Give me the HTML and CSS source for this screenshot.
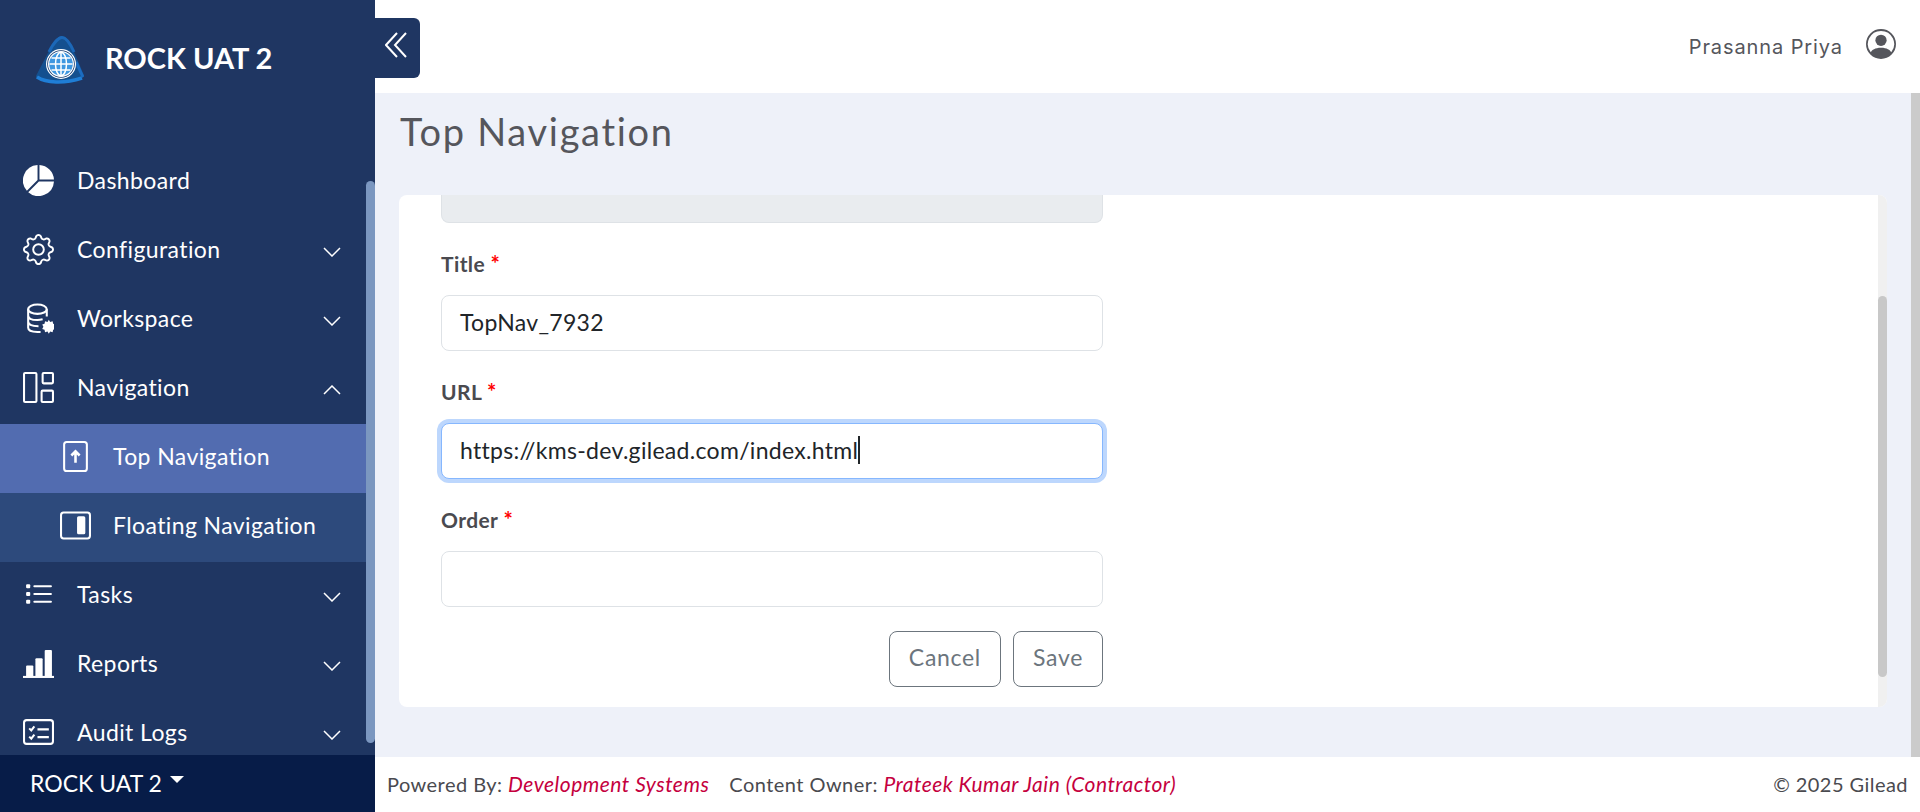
FILE: index.html
```html
<!DOCTYPE html>
<html>
  <head>
    <title>Top Navigation</title>
    <meta charset="UTF-8">
    <link rel="stylesheet" href="styles.css">
  </head>
  <body>
    <aside class="sidebar">
      <div class="brand">
        <svg class="brand-logo" viewBox="0 0 48 48">
          <path d="M26 0C30 0 33 4 36 11L47 37C49 41 47 42 44 43C31 48 16 48 3 43C0 42 -1 41 1 38L15 11C19 4 22 0 26 0Z" fill="#14508f"/>
          <path d="M13 16C18 6 23 1.500 26 1.500C30 1.500 34 7 38 16" fill="none" stroke="#1c68b8" stroke-width="3"/>
          <path d="M1 41C10 47 28 48 46 42" fill="none" stroke="#1f7ed6" stroke-width="3.500"/>
          <path d="M47 41C44 35 42 30 40 26" fill="none" stroke="#1c6cc0" stroke-width="3"/>
          <circle cx="25" cy="28" r="15" fill="#fff"/>
          <circle cx="25" cy="28" r="13.800" fill="#12386e"/>
          <circle cx="25" cy="28" r="13" fill="#fff"/>
          <circle cx="25" cy="28" r="11.800" fill="#3f97e0"/>
          <g fill="none" stroke="#fff" stroke-width="1.500">
            <ellipse cx="25" cy="28" rx="5.500" ry="11.800"/>
            <path d="M25 16.500V39.500M13.500 28H36.500M15.500 22H34.500M15.500 34H34.500"/>
          </g>
        </svg>
        <span class="brand-name">ROCK UAT 2</span>
      </div>
      <div class="nav-wrap">
        <nav class="nav">
          <a class="nav-item">
            <svg class="nav-icon" viewBox="0 0 16 16" fill="#fff"><path d="M15.985 8.500H8.207l-5.500 5.500a8 8 0 0 0 13.277-5.500zM2 13.293A8 8 0 0 1 7.500.015v7.778l-5.500 5.500zM8.500.015V7.500h7.485A8 8 0 0 0 8.500.015z"/></svg>
            <span class="nav-label">Dashboard</span>
          </a>
          <a class="nav-item">
            <svg class="nav-icon" viewBox="0 0 16 16" fill="#fff"><path d="M8 4.754a3.246 3.246 0 1 0 0 6.492 3.246 3.246 0 0 0 0-6.492zM5.754 8a2.246 2.246 0 1 1 4.492 0 2.246 2.246 0 0 1-4.492 0z"/><path d="M9.796 1.343c-.527-1.790-3.065-1.790-3.592 0l-.094.319a.873.873 0 0 1-1.255.520l-.292-.160c-1.640-.892-3.433.902-2.540 2.541l.159.292a.873.873 0 0 1-.520 1.255l-.319.094c-1.790.527-1.790 3.065 0 3.592l.319.094a.873.873 0 0 1 .520 1.255l-.160.292c-.892 1.640.901 3.434 2.541 2.540l.292-.159a.873.873 0 0 1 1.255.520l.094.319c.527 1.790 3.065 1.790 3.592 0l.094-.319a.873.873 0 0 1 1.255-.520l.292.160c1.640.893 3.434-.902 2.540-2.541l-.159-.292a.873.873 0 0 1 .520-1.255l.319-.094c1.790-.527 1.790-3.065 0-3.592l-.319-.094a.873.873 0 0 1-.520-1.255l.160-.292c.893-1.640-.902-3.433-2.541-2.540l-.292.159a.873.873 0 0 1-1.255-.520l-.094-.319zm-2.633.283c.246-.835 1.428-.835 1.674 0l.094.319a1.873 1.873 0 0 0 2.693 1.115l.291-.160c.764-.415 1.600.420 1.184 1.185l-.159.292a1.873 1.873 0 0 0 1.116 2.692l.318.094c.835.246.835 1.428 0 1.674l-.319.094a1.873 1.873 0 0 0-1.115 2.693l.160.291c.415.764-.420 1.600-1.185 1.184l-.291-.159a1.873 1.873 0 0 0-2.693 1.116l-.094.318c-.246.835-1.428.835-1.674 0l-.094-.319a1.873 1.873 0 0 0-2.692-1.115l-.292.160c-.764.415-1.600-.420-1.184-1.185l.159-.291A1.873 1.873 0 0 0 1.945 8.930l-.319-.094c-.835-.246-.835-1.428 0-1.674l.319-.094A1.873 1.873 0 0 0 3.060 4.377l-.160-.292c-.415-.764.420-1.600 1.185-1.184l.292.159a1.873 1.873 0 0 0 2.692-1.115l.094-.319z"/></svg>
            <span class="nav-label">Configuration</span>
            <svg class="chevron" viewBox="0 0 18 10"><path d="M1 1L9 9L17 1"/></svg>
          </a>
          <a class="nav-item">
            <svg class="nav-icon" viewBox="0 0 30 30" fill="none" stroke="#fff" stroke-width="2">
              <ellipse cx="14" cy="6" rx="9" ry="4.500"/>
              <path d="M5 6V24C5 26.500 8.500 28 14 28H17M5 12C5 15 9 16.500 14 16.500C15.500 16.500 17 16.300 19 15.800M5 18C5 21 9 22.500 15 22.500M23 6V13"/>
              <path d="M24 14.500l1.500 2.500 2.800-.8.600 2.800 2.600 1-1.300 2.500 1.300 2.500-2.600 1-.6 2.800-2.800-.8-1.500 2.500-1.500-2.500-2.800.8-.6-2.800-2.600-1 1.300-2.500-1.300-2.500 2.600-1 .6-2.800 2.800.8z" transform="translate(25 23) scale(.85) translate(-24 -22.500)" fill="#fff" stroke="none"/>
            </svg>
            <span class="nav-label">Workspace</span>
            <svg class="chevron" viewBox="0 0 18 10"><path d="M1 1L9 9L17 1"/></svg>
          </a>
          <a class="nav-item">
            <svg class="nav-icon" viewBox="0 0 30 30" fill="none" stroke="#fff" stroke-width="2">
              <rect x="1" y="1" width="12" height="28" rx="1"/>
              <rect x="19" y="1" width="10" height="10" rx="1"/>
              <rect x="18" y="18" width="11" height="11" rx="1"/>
            </svg>
            <span class="nav-label">Navigation</span>
            <svg class="chevron" viewBox="0 0 18 10"><path d="M1 9L9 1L17 9"/></svg>
          </a>
          <a class="nav-item sub active">
            <svg class="sub-icon" viewBox="0 0 30 30" fill="none" stroke="#fff" stroke-width="2">
              <rect x="4" y="1" width="22" height="28" rx="2.500"/>
              <path d="M15 21V10M11 14L15 10L19 14" stroke-width="2.500"/>
            </svg>
            <span class="nav-label">Top Navigation</span>
          </a>
          <a class="nav-item sub">
            <svg class="sub-icon" viewBox="0 0 30 30" fill="none" stroke="#fff" stroke-width="2">
              <rect x="1" y="2.500" width="28" height="25" rx="2.500"/>
              <rect x="16.500" y="6" width="8" height="17.500" rx="1.500" fill="#fff" stroke="none"/>
            </svg>
            <span class="nav-label">Floating Navigation</span>
          </a>
          <a class="nav-item">
            <svg class="nav-icon" viewBox="0 0 30 30" fill="#fff">
              <rect x="3" y="5" width="4" height="4" rx="1"/>
              <rect x="3" y="12.500" width="4" height="4" rx="1"/>
              <rect x="3" y="20" width="4" height="4" rx="1"/>
              <rect x="10" y="6" width="18" height="2" rx="1"/>
              <rect x="10" y="13.500" width="18" height="2" rx="1"/>
              <rect x="10" y="21" width="18" height="2" rx="1"/>
            </svg>
            <span class="nav-label">Tasks</span>
            <svg class="chevron" viewBox="0 0 18 10"><path d="M1 1L9 9L17 1"/></svg>
          </a>
          <a class="nav-item">
            <svg class="nav-icon" viewBox="0 0 30 30" fill="#fff">
              <rect x="3" y="17" width="7" height="11" rx="1"/>
              <rect x="12" y="10" width="7" height="18" rx="1"/>
              <rect x="21" y="2" width="7" height="26" rx="1"/>
              <rect x="0" y="27" width="30" height="2"/>
            </svg>
            <span class="nav-label">Reports</span>
            <svg class="chevron" viewBox="0 0 18 10"><path d="M1 1L9 9L17 1"/></svg>
          </a>
          <a class="nav-item">
            <svg class="nav-icon" viewBox="0 0 30 30" fill="none" stroke="#fff" stroke-width="2">
              <rect x="1" y="3" width="28" height="23" rx="2.500"/>
              <path d="M6 11L8 13L11 9M6 19L8 21L11 17M14 12H25M14 19.500H25"/>
            </svg>
            <span class="nav-label">Audit Logs</span>
            <svg class="chevron" viewBox="0 0 18 10"><path d="M1 1L9 9L17 1"/></svg>
          </a>
        </nav>
        <div class="nav-scroll"><div class="nav-thumb"></div></div>
      </div>
      <div class="env">ROCK UAT 2<span class="env-caret"></span></div>
    </aside>

    <div class="page">
      <header class="topbar">
        <button class="toggle">
          <svg viewBox="0 0 22 26" fill="none" stroke="#fff" stroke-width="2"><path d="M12 1L1 13L12 25M21 1L10 13L21 25"/></svg>
        </button>
        <div class="user">
          <span class="user-name">Prasanna Priya</span>
          <svg class="user-icon" viewBox="0 0 16 16" fill="#55565c"><path d="M11 6a3 3 0 1 1-6 0 3 3 0 0 1 6 0z"/><path d="M0 8a8 8 0 1 1 16 0A8 8 0 0 1 0 8zm8-7a7 7 0 0 0-5.468 11.370C3.242 11.226 4.805 10 8 10s4.757 1.225 5.468 2.370A7 7 0 0 0 8 1z"/></svg>
        </div>
      </header>

      <div class="middle">
        <main class="content">
          <h1>Top Navigation</h1>
          <section class="card">
            <form class="form">
              <div class="input disabled"></div>
              <label class="label">Title <span class="req">*</span></label>
              <div class="input">TopNav_7932</div>
              <label class="label">URL <span class="req">*</span></label>
              <div class="input focus">https://kms-dev.gilead.com/index.html<span class="caret"></span></div>
              <label class="label">Order <span class="req">*</span></label>
              <div class="input"></div>
              <div class="actions">
                <button class="btn" type="button">Cancel</button>
                <button class="btn" type="button">Save</button>
              </div>
            </form>
            <div class="card-scroll"><div class="card-thumb"></div></div>
          </section>
        </main>
        <div class="page-scroll"></div>
      </div>

      <footer class="footer">
        <span>Powered By: <em>Development Systems</em></span>
        <span class="owner">Content Owner: <em>Prateek Kumar Jain (Contractor)</em></span>
        <span class="copy">© 2025 Gilead</span>
      </footer>
    </div>
  </body>
</html>
```

FILE: styles.css
```css
/* Layout shell */
html,
body {
  height: 100%;
}

body {
  margin: 0;
  display: flex;
  overflow: hidden;
  font-family: Lato, "Open Sans", sans-serif;
  color: #4a4a4f;
  background-color: #fff;
}

/* Sidebar */
.sidebar {
  width: 375px;
  flex-shrink: 0;
  display: flex;
  flex-direction: column;
  background-color: #1f3662;
  color: #fff;
}

.brand {
  height: 148px;
  flex-shrink: 0;
  box-sizing: border-box;
  display: flex;
  align-items: flex-start;
  padding: 36px 0 0 36px;
  gap: 21px;
}

.brand-logo {
  width: 48px;
  height: 48px;
}

.brand-name {
  font-size: 29px;
  font-weight: 700;
  line-height: 44px;
}

.nav-wrap {
  flex: 1;
  min-height: 0;
  display: flex;
  overflow: hidden;
}

.nav {
  flex: 1;
  display: flex;
  flex-direction: column;
}

.nav-item {
  height: 69px;
  flex-shrink: 0;
  box-sizing: border-box;
  display: flex;
  align-items: center;
  padding: 0 25px 5px 23px;
  font-size: 23px;
  letter-spacing: 0.4px;
}

.nav-icon {
  width: 31px;
  height: 31px;
  margin-right: 23px;
  flex-shrink: 0;
}

.nav-label {
  flex: 1;
}

.chevron {
  width: 18px;
  height: 10px;
  margin-top: 5px;
  fill: none;
  stroke: #fff;
  stroke-width: 1.500;
}

.sub {
  padding-left: 60px;
  background-color: #2d4a7c;
}

.sub.active {
  background-color: #526cb0;
}

.sub-icon {
  width: 31px;
  height: 31px;
  margin-right: 22px;
  flex-shrink: 0;
}

.nav-scroll {
  width: 9px;
  flex-shrink: 0;
}

.nav-thumb {
  height: 562px;
  margin-top: 33px;
  border-radius: 5px;
  background-color: #7b97c0;
}

.env {
  height: 57px;
  flex-shrink: 0;
  box-sizing: border-box;
  display: flex;
  align-items: center;
  padding: 0 0 2px 30px;
  font-size: 23px;
  background-color: #071c48;
}

.env-caret {
  margin: 0 0 6px 8px;
  border-top: 7px solid #fff;
  border-left: 7px solid transparent;
  border-right: 7px solid transparent;
}

/* Main column */
.page {
  flex: 1;
  min-width: 0;
  display: flex;
  flex-direction: column;
}

.topbar {
  height: 93px;
  flex-shrink: 0;
  display: flex;
  align-items: flex-start;
  justify-content: space-between;
  background-color: #fff;
}

.toggle {
  width: 45px;
  height: 60px;
  margin-top: 18px;
  padding: 0 0 0 10px;
  display: flex;
  align-items: center;
  border: none;
  border-radius: 0 6px 6px 0;
  background-color: #1f3662;
}

.toggle svg {
  width: 22px;
  height: 26px;
  margin-top: -6px;
}

.user {
  display: flex;
  align-items: center;
  gap: 23px;
  padding: 29px 24px 0 0;
}

.user-name {
  margin-top: 5px;
  font-family: Inter, sans-serif;
  font-size: 20px;
  letter-spacing: 0.9px;
  color: #55565c;
}

.user-icon {
  width: 30px;
  height: 30px;
}

.middle {
  flex: 1;
  min-height: 0;
  display: flex;
  background-color: #eef1f9;
}

.content {
  flex: 1;
  min-width: 0;
  padding: 0 24px 0 24px;
}

h1 {
  height: 102px;
  margin: 0 0 0 1px;
  box-sizing: border-box;
  padding-top: 15px;
  font-size: 38px;
  font-weight: 400;
  line-height: 46px;
  letter-spacing: 1.7px;
  color: #55565c;
}

.card {
  height: 512px;
  display: flex;
  border-radius: 8px;
  overflow: hidden;
  background-color: #fff;
}

.form {
  flex: 1;
  padding: 0 0 0 42px;
  display: flex;
  flex-direction: column;
  align-items: flex-start;
}

.label {
  height: 72px;
  box-sizing: border-box;
  padding-top: 27px;
  font-size: 21px;
  font-weight: 700;
  line-height: 28px;
  letter-spacing: 0.4px;
}

.req {
  font-size: 22px;
  color: #f00;
}

.input {
  width: 662px;
  height: 56px;
  flex-shrink: 0;
  box-sizing: border-box;
  display: flex;
  align-items: center;
  padding: 0 18px 2px;
  font-size: 23px;
  letter-spacing: 0.3px;
  color: #212529;
  border: 1px solid #dee2e6;
  border-radius: 8px;
  background-color: #fff;
}

.input.disabled {
  height: 28px;
  border-top: none;
  border-radius: 0 0 8px 8px;
  background-color: #e9ecef;
}

.input.focus {
  border-color: #86b7fe;
  box-shadow: 0 0 0 4px #bdd7fd;
}

.caret {
  width: 2px;
  height: 28px;
  background-color: #212529;
}

.actions {
  width: 662px;
  margin-top: 24px;
  display: flex;
  justify-content: flex-end;
  gap: 12px;
}

.btn {
  height: 56px;
  padding: 0 19px 4px;
  font-family: Lato, sans-serif;
  font-size: 23px;
  letter-spacing: 0.7px;
  color: #6c757d;
  border: 1px solid #6c757d;
  border-radius: 8px;
  background-color: #fff;
}

.card-scroll {
  width: 9px;
  flex-shrink: 0;
  background-color: #f0f0f0;
}

.card-thumb {
  height: 381px;
  margin-top: 101px;
  border-radius: 5px;
  background-color: #c8c8c8;
}

.page-scroll {
  width: 9px;
  flex-shrink: 0;
  background-color: #cbcbcb;
}

/* Footer */
.footer {
  height: 55px;
  flex-shrink: 0;
  box-sizing: border-box;
  display: flex;
  align-items: center;
  padding: 0 12px 2px;
  font-size: 20px;
  letter-spacing: 0.45px;
  background-color: #fff;
}

.footer em {
  font-size: 21px;
  letter-spacing: 0.5px;
  color: #c5003e;
}

.owner {
  margin-left: 20px;
}

.copy {
  margin-left: auto;
}
```
